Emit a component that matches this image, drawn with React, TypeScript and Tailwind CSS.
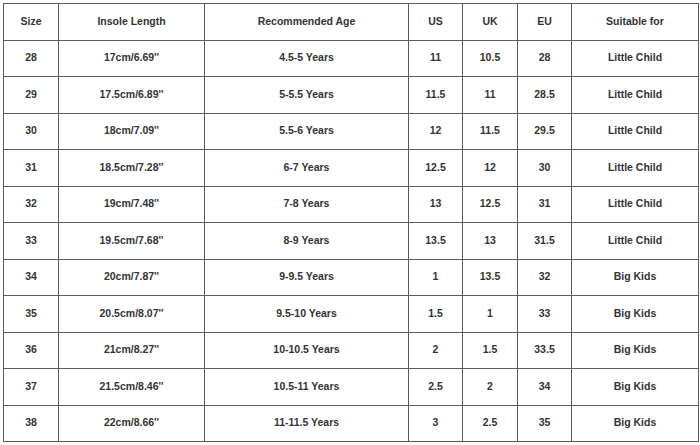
const headers = ["Size", "Insole Length", "Recommended Age", "US", "UK", "EU", "Suitable for"];

const widths = ["w-[55px]", "w-[146px]", "w-[204px]", "w-[54px]", "w-[55px]", "w-[54px]", "w-[127px]"];

const rows: string[][] = [
  ["28", "17cm/6.69''", "4.5-5 Years", "11", "10.5", "28", "Little Child"],
  ["29", "17.5cm/6.89''", "5-5.5 Years", "11.5", "11", "28.5", "Little Child"],
  ["30", "18cm/7.09''", "5.5-6 Years", "12", "11.5", "29.5", "Little Child"],
  ["31", "18.5cm/7.28''", "6-7 Years", "12.5", "12", "30", "Little Child"],
  ["32", "19cm/7.48''", "7-8 Years", "13", "12.5", "31", "Little Child"],
  ["33", "19.5cm/7.68''", "8-9 Years", "13.5", "13", "31.5", "Little Child"],
  ["34", "20cm/7.87''", "9-9.5 Years", "1", "13.5", "32", "Big Kids"],
  ["35", "20.5cm/8.07''", "9.5-10 Years", "1.5", "1", "33", "Big Kids"],
  ["36", "21cm/8.27''", "10-10.5 Years", "2", "1.5", "33.5", "Big Kids"],
  ["37", "21.5cm/8.46''", "10.5-11 Years", "2.5", "2", "34", "Big Kids"],
  ["38", "22cm/8.66''", "11-11.5 Years", "3", "2.5", "35", "Big Kids"],
];

export default function App() {
  return (
    <div className="h-[445px] w-[700px] bg-white pl-[3px] pt-[3px] font-['Liberation_Sans',Arial,sans-serif]">
      <table className="h-[439px] w-[695px] table-fixed border-collapse text-[10.5px] font-bold text-[#333]">
        <thead>
          <tr className="h-[36.5px]">
            {headers.map((h, i) => (
              <th key={h} className={`${widths[i]} border border-[#5a5a5a] p-0 text-center align-middle font-bold`}>
                {h}
              </th>
            ))}
          </tr>
        </thead>
        <tbody>
          {rows.map((row) => (
            <tr key={row[0]} className="h-[36.5px]">
              {row.map((cell, i) => (
                <td key={i} className="border border-[#5a5a5a] p-0 text-center align-middle">
                  {cell}
                </td>
              ))}
            </tr>
          ))}
        </tbody>
      </table>
    </div>
  );
}
